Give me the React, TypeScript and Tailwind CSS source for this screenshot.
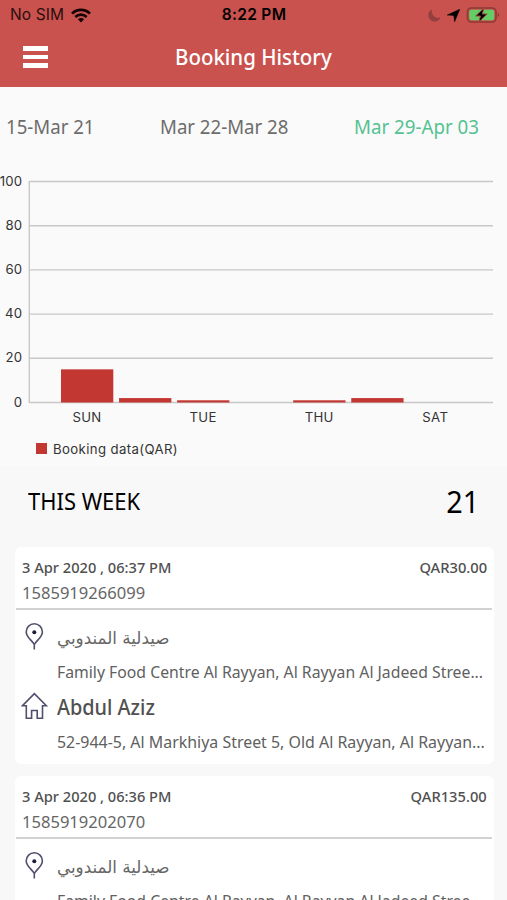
import type { ReactNode } from "react";

const bookings = [
  { date: "3 Apr 2020 , 06:37 PM", id: "1585919266099", amount: "QAR30.00" },
  { date: "3 Apr 2020 , 06:36 PM", id: "1585919202070", amount: "QAR135.00" },
];

const bars = [
  { day: "SUN", value: 15 },
  { day: "", value: 2 },
  { day: "TUE", value: 1 },
  { day: "", value: 0 },
  { day: "THU", value: 1 },
  { day: "", value: 2 },
  { day: "SAT", value: 0 },
];

const ticks = [100, 80, 60, 40, 20, 0];

const toY = (value: number) => 234.5 - value * 2.21;

const Text = ({ className, children }: { className: string; children: ReactNode }) => (
  <span className={`block w-max whitespace-nowrap ${className}`}>{children}</span>
);

const StatusBar = () => (
  <div className="flex h-[30px] items-center justify-between pl-[10px] pr-[7px] font-['Inter'] text-black">
    <div className="flex w-[140px] items-center gap-[7px]">
      <span className="text-[15.5px] leading-none tracking-[0.1px] text-[#2a0e0d]">No SIM</span>
      <svg className="shrink-0" width="20" height="15" viewBox="0 0 20 15" fill="none" stroke="#160404" strokeWidth="2.7">
        <path d="M1 5.6C6 .6 14 .6 19 5.6" />
        <path d="M4.3 9C7.6 5.8 12.4 5.8 15.7 9" />
        <path d="M10 14.6 6.9 11.3c1.8-1.6 4.4-1.6 6.2 0z" fill="#160404" stroke="none" />
      </svg>
    </div>
    <span className="-ml-[2px] text-[15.5px] font-semibold leading-none tracking-[0.3px]">8:22 PM</span>
    <div className="flex w-[140px] items-center justify-end gap-[6px]">
      <svg className="shrink-0" width="13" height="13" viewBox="0 0 13 13">
        <path d="M4 .4C2.9 5.6 6.8 9.6 12.6 8.6A6.4 6.4 0 1 1 4 .4z" fill="#96403e" />
      </svg>
      <svg className="shrink-0" width="13" height="13" viewBox="0 0 13 13">
        <path d="M12.8.2 7.6 12.8 6.8 6.5.2 6z" fill="#000" stroke="#000" strokeWidth=".5" />
      </svg>
      <svg className="shrink-0" width="34" height="16" viewBox="0 0 34 16">
        <rect x="1.5" y="1" width="28.500" height="14" rx="4" fill="none" stroke="#8b3937" strokeWidth="1.6" />
        <rect x="3.3" y="2.8" width="24.900" height="10.4" rx="2.2" fill="#64ce66" />
        <path d="M31.6 5.8c2 .8 2 3.6 0 4.4z" fill="#8b3937" />
        <path d="M18 1 9.600 9h4.800l-1.500 6 8.300-8h-4.900z" fill="#000" stroke="#a04a3c" strokeWidth="1" />
      </svg>
    </div>
  </div>
);

const Chart = () => (
  <svg className="block shrink-0" width="507" height="298" viewBox="0 0 507 298" fontFamily="Inter" fontSize="13.2" fill="#333">
    {ticks.map((tick) => (
      <g key={tick}>
        <line x1="29" x2="493" y1={toY(tick)} y2={toY(tick)} stroke="#c8c8c8" strokeWidth="1.4" />
        <text x="22.3" y={toY(tick) + 4} textAnchor="end" letterSpacing=".2">
          {tick}
        </text>
      </g>
    ))}
    <line x1="29.3" x2="29.3" y1="13" y2="235" stroke="#c4c4c4" strokeWidth="1.3" />
    {bars.map((bar, i) => (
      <g key={i}>
        {bar.value > 0 && (
          <rect x={61 + i * 58.05} y={toY(bar.value)} width="52.3" height={bar.value * 2.21} fill="#c23732" />
        )}
        <text x={87 + i * 58.05} y="253.5" textAnchor="middle" letterSpacing=".3">
          {bar.day}
        </text>
      </g>
    ))}
    <rect x="36" y="275" width="11" height="11" fill="#c23732" />
    <text x="53" y="285.8" letterSpacing=".38">
      Booking data(QAR)
    </text>
  </svg>
);

const PinIcon = () => (
  <svg className="shrink-0" width="28" height="28" viewBox="0 0 28 28" fill="none" stroke="#50506e" strokeWidth="1.6">
    <path d="M13.3 21.500C11.400 17.800 5.200 14 5.200 8.900a8.100 8.100 0 0 1 16.200 0c0 5.100-6.200 8.900-8.100 12.600zM13.3 20.500v6" />
    <circle cx="13.3" cy="9.3" r="2" fill="#1c1c3c" stroke="none" />
  </svg>
);

const HomeIcon = () => (
  <svg className="shrink-0" width="28" height="28" viewBox="0 0 28 28" fill="none" stroke="#50506e" strokeWidth="1.6">
    <path d="M13.400 1.600 1.500 13.700h3.800v12.600h5.300v-7.800h5.600v7.800h5.300V13.700h3.800z" />
  </svg>
);

const BookingCard = ({ date, id, amount }: (typeof bookings)[number]) => (
  <div className="ml-[15px] mr-[13px] h-[217px] shrink-0 rounded-md bg-white text-[#5a5a5a]">
    <div className="ml-px mr-[2px] h-[63px] border-b-2 border-[#d2d2d2] pl-[6px] pr-[5px] pt-[9px]">
      <div className="flex h-[23px] items-center justify-between">
        <Text className="origin-left scale-x-[0.975] text-[15px] font-medium text-[#505050]">{date}</Text>
        <Text className="origin-right scale-x-[0.98] text-[15px] font-medium text-[#505050]">{amount}</Text>
      </div>
      <Text className="origin-left scale-x-[0.974] text-[17px] leading-[27px] text-[#666]">{id}</Text>
    </div>
    <div className="flex pl-[6px] pt-[13px]">
      <PinIcon />
      <div className="ml-[8px] h-[69px]">
        <Text className="origin-left scale-x-[0.985] font-['DejaVu_Sans'] text-[17px] leading-[30px] text-[#666]">
          صيدلية المندوبي
        </Text>
        <Text className="mt-[4px] origin-left scale-x-[0.928] text-[17px] leading-[30px] text-[#606060]">
          Family Food Centre Al Rayyan, Al Rayyan Al Jadeed Stree...
        </Text>
      </div>
    </div>
    <div className="flex pl-[6px]">
      <HomeIcon />
      <div className="ml-[8px]">
        <Text className="origin-left scale-x-[0.945] text-[21px] font-medium leading-[30px] text-[#505050]">
          Abdul Aziz
        </Text>
        <Text className="mt-[5px] origin-left scale-x-[0.937] text-[17px] leading-[30px] text-[#606060]">
          52-944-5, Al Markhiya Street 5, Old Al Rayyan, Al Rayyan...
        </Text>
      </div>
    </div>
  </div>
);

const App = () => {
  return (
    <div className="flex h-[900px] w-[507px] flex-col overflow-hidden bg-[#fafafa] font-['Noto_Sans',sans-serif]">
      <header className="h-[87px] shrink-0 bg-[#c9524f]">
        <StatusBar />
        <div className="flex h-[54px] items-center pl-[23px]">
          <div className="flex w-[25px] flex-col gap-[4px]">
            <div className="h-[4.5px] bg-white" />
            <div className="h-[4.5px] bg-white" />
            <div className="h-[4.5px] bg-white" />
          </div>
          <Text className="mb-[2px] ml-[127px] origin-left scale-x-[0.93] text-[22px] font-medium text-white">
            Booking History
          </Text>
        </div>
      </header>
      <div className="grid h-[81px] shrink-0 grid-cols-[154px_194px_1fr] items-center pl-[6px] text-[19px] text-[#6c6c6c]">
        <Text className="origin-left scale-x-[0.98]">15-Mar 21</Text>
        <Text className="origin-left scale-x-[0.98]">Mar 22-Mar 28</Text>
        <Text className="origin-left scale-x-[0.985] text-[#54c292]">Mar 29-Apr 03</Text>
      </div>
      <Chart />
      <div className="flex h-[81px] shrink-0 items-center justify-between bg-[#f8f8f8] pb-[11px] pl-[28px] pr-[28px] text-black">
        <Text className="origin-left scale-x-[0.915] text-[24px]">THIS WEEK</Text>
        <Text className="origin-right scale-x-[0.96] text-[30px]">21</Text>
      </div>
      <main className="flex flex-1 flex-col gap-[12px] overflow-hidden bg-[#f8f8f8]">
        {bookings.map((booking) => (
          <BookingCard key={booking.id} {...booking} />
        ))}
      </main>
    </div>
  );
};

export default App;
